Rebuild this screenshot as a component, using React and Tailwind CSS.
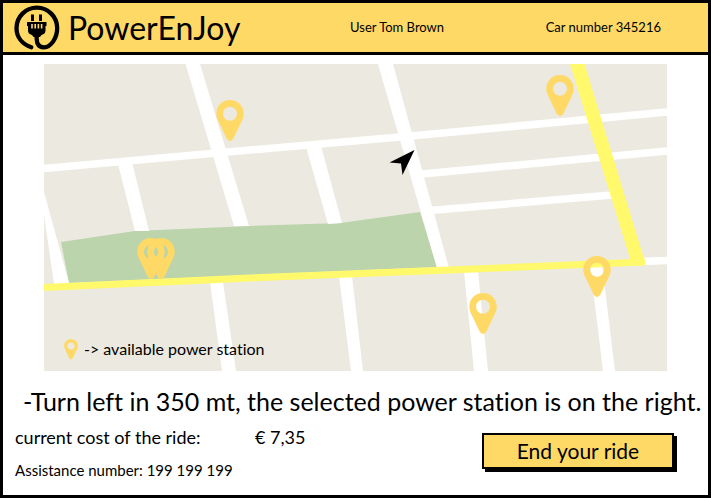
const PINS = [
  { x: 230, y: 100 },
  { x: 560, y: 75 },
  { x: 151, y: 238 },
  { x: 161, y: 238 },
  { x: 483, y: 293 },
  { x: 597, y: 256 },
];

const PIN_PATH =
  "M0 0C-7.8 0-13.7 6-13.7 13.5C-13.7 16.5-12.9 18.5-12 20.5L-3.4 38.6Q-2.2 41 0 41Q2.2 41 3.4 38.6L12 20.5C12.9 18.5 13.7 16.5 13.7 13.5C13.7 6 7.8 0 0 0ZM0 6.8A7 7 0 1 1 0 20.8A7 7 0 1 1 0 6.8Z";

function Logo() {
  return (
    <svg viewBox="0 0 46 46" className="size-[46px] shrink-0" aria-hidden="true">
      <path
        d="M17.3 42.3C8 39 2.500 32 2.500 23A20.350 20.350 0 0 1 43.200 23C43.200 33 37 42.300 30 42.300C23 42.300 22.500 37 22.500 29"
        fill="none"
        stroke="#000"
        strokeWidth="4.300"
        strokeLinecap="round"
      />
      <path d="M17 9.500h3v6.500h-3zM25 9.500h3v6.500h-3z" />
      <path d="M13 17h19.500v4h-1v4.500q0 3.500-4 4.500l-1.500 2h-6.500l-1.500-2q-4-1-4-4.500v-4.500h-1z" />
      <path d="M18 19v4.500M21.200 19v4.500M24.400 19v4.500M27.600 19v4.500" stroke="#ffd966" strokeWidth="1.600" />
    </svg>
  );
}

function CityMap() {
  return (
    <svg viewBox="44 64 623 307" className="block w-full bg-[#ece9e1]" role="img" aria-label="Map">
      <polygon points="61,242 135,231 250,226 340,223 420,212 437,267 250,275 69,283" fill="#bbd4ac" />
      <g fill="#fff">
        <polygon points="185.500,64 200,64 249,226 234,226" />
        <polygon points="118,164 132,162 149,231 135,231" />
        <polygon points="44,192 69,283 54,284 44,215" />
        <polygon points="306,147 321,146 342,223 328,224" />
        <polygon points="378,64 393,64 449,268 437,268" />
        <polygon points="210,282 223,282 236,371 222,371" />
        <polygon points="339,276 352,276 363,371 351,371" />
        <polygon points="464,271 478,271 488,371 474,371" />
        <polygon points="590,264 602,264 615,371 603,371" />
      </g>
      <g fill="none" stroke="#fff" strokeWidth="7.500">
        <path d="M44 168.500L250 150L400 137L667 112" />
        <path d="M422 174L667 151" />
        <path d="M430 210.500L612 195" />
        <path d="M640 261.500L667 260.500" />
      </g>
      <polygon points="570,64 584.500,64 645,262 645,265 632,265" fill="#fff96b" />
      <path d="M44 287.500L250 278L437 270.500L645 262" fill="none" stroke="#fff96b" strokeWidth="7" />
      {PINS.map((pin) => (
        <path
          key={pin.x}
          d={PIN_PATH}
          transform={`translate(${pin.x} ${pin.y})`}
          fill="#ffd966"
          fillRule="evenodd"
        />
      ))}
      <path d="M414.500 150L389.500 162.500L401 163.500L402.500 175Z" fill="#000" />
    </svg>
  );
}

export default function App() {
  return (
    <div className="min-h-screen border-[3px] border-black bg-white pb-2 font-[Lato,sans-serif] text-black [font-variant-ligatures:none]">
      <header className="flex h-[52px] items-center border-b-[3px] border-black bg-[#ffd966] px-[11px]">
        <Logo />
        <h1 className="ml-2 w-[282px] text-[32px] leading-10">PowerEnJoy</h1>
        <p className="text-[13px]">User Tom Brown</p>
        <p className="ml-auto mr-9 text-[13px]">Car number 345216</p>
      </header>
      <main>
        <section className="relative mx-[41px] mt-[9px]">
          <CityMap />
          <p className="absolute bottom-2.5 left-5 flex items-center gap-1.5 text-base leading-6">
            <svg viewBox="-14 0 28 42" className="h-[21px] w-3.5" aria-hidden="true">
              <path d={PIN_PATH} fill="#ffd966" fillRule="evenodd" />
            </svg>
            -&gt; available power station
          </p>
        </section>
        <p className="ml-5 mt-3 text-[25px] leading-9 whitespace-nowrap">
          -Turn left in 350 mt, the selected power station is on the right.
        </p>
        <div className="flex items-start justify-between pl-3 pr-[34px] pt-1.5">
          <div>
            <p className="flex text-[18px] leading-6">
              <span className="w-60">current cost of the ride:</span>
              <span>€ 7,35</span>
            </p>
            <p className="mt-[11px] text-[15px] leading-5">Assistance number: 199 199 199</p>
          </div>
          <button
            type="button"
            className="mt-2 h-9 w-[192px] border-2 border-black bg-[#ffd966] text-[21px] leading-6 shadow-[3px_3px_0_#000]"
          >
            End your ride
          </button>
        </div>
      </main>
    </div>
  );
}
